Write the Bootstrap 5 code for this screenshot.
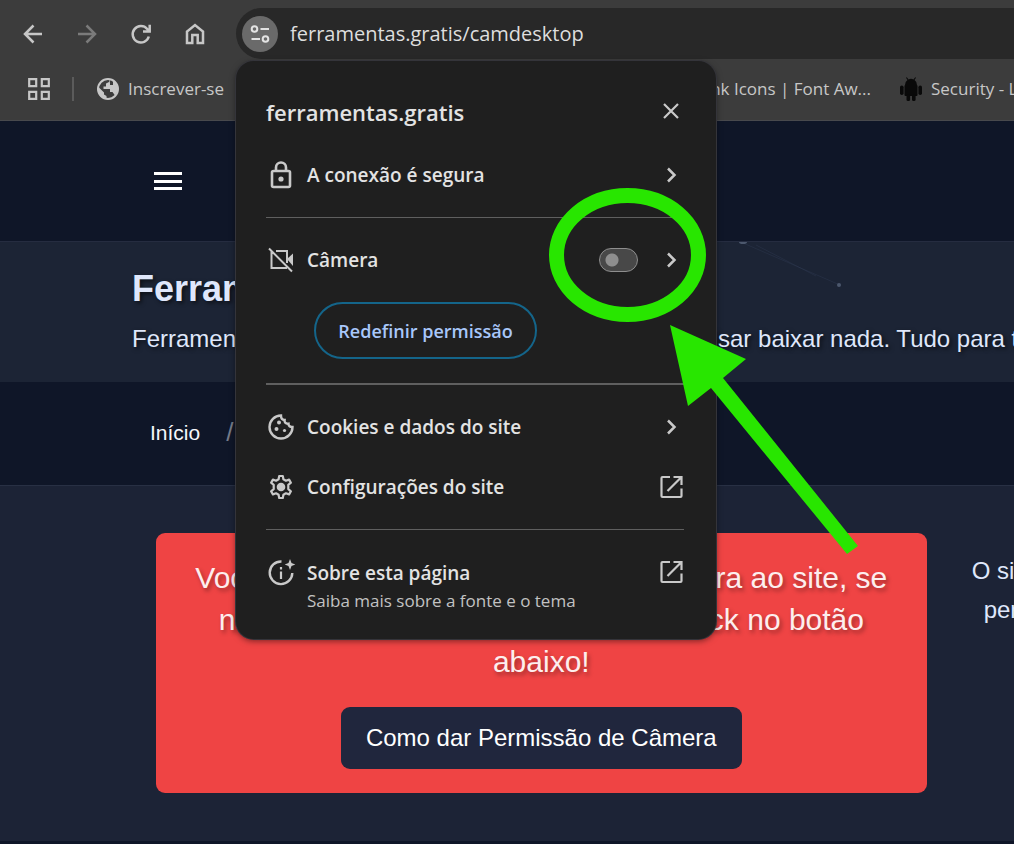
<!DOCTYPE html>
<html lang="pt-BR">
<head>
<meta charset="utf-8">
<meta name="viewport" content="width=device-width, initial-scale=1">
<title>ferramentas.gratis</title>
<link href="https://cdn.jsdelivr.net/npm/bootstrap@5.3.0/dist/css/bootstrap.min.css" rel="stylesheet">
<style>
  body { background: #1c2336; color: #dfe7fb; font-family: "Liberation Sans", Arial, sans-serif; font-size: 24px; overflow-x: hidden; min-height: 100vh; }
  svg { display: block; flex: none; }
  .chrome { background: #3c3c3c; color: #c7c7c7; font-family: "Open Sans", "Noto Sans", sans-serif; z-index: 10; border-bottom: 1px solid #48494d; }
  .tool-row { padding: 8px 0 0 20px; gap: 28px; }
  .tool-btn { flex: none; width: 26px; height: 26px; padding: 0; border: 0; background: none; color: #c7c7c7; }
  .tool-btn:disabled { color: #7b7b7b; opacity: 1; }
  .omnibox { height: 51px; padding-left: 6px; background: #282828; border-radius: 26px 0 0 26px; }
  .tune { flex: none; width: 36px; height: 36px; padding: 0; border: 0; border-radius: 50%; background: #6a6a6a; color: #e3e3e3; }
  .url { min-width: 0; background: none; border: 0; padding: 0; margin-left: 12px; color: #dedede; font-size: 20px; line-height: 28px; outline: 0; }
  .marks { height: 61px; padding: 0 0 2px 28px; font-size: 17px; line-height: 28px; white-space: nowrap; overflow: hidden; }
  .marks a { flex: none; color: #c7c7c7; text-decoration: none; }
  .rule { flex: none; width: 2px; height: 24px; background: #5b5b5b; margin: 0 22px; }
  .mark-gap { margin-left: 473px; }

  .popup { position: absolute; top: 53px; left: 0; width: 480px; padding: 23px 32px 24px 30px; background: #1f1f1f; color: #e3e3e3; border-radius: 18px; box-shadow: 0 0 0 1px #34343a, 0 2px 6px rgba(0,0,0,.5); font-size: 19px; font-weight: 600; line-height: 28px; }
  .popup h1 { font-size: 22px; font-weight: 600; line-height: 56px; margin: 0 0 5px; }
  .popup-row { display: flex; align-items: center; width: 100%; height: 60px; padding: 0 0 0 2px; border: 0; background: none; color: inherit; font-weight: 600; text-align: left; text-decoration: none; }
  .popup-row svg, .close-btn svg { color: #c9c9c9; }
  .popup-row .ico { width: 26px; margin-right: 13px; overflow: visible; }
  .popup hr { margin: 12px 0; border: 0; height: 1px; background: #5f5f5f; opacity: 1; }
  .popup hr.strong { height: 2px; margin-top: 24px; }
  .close-btn { border: 0; background: none; padding: 0 0 8px; }
  .reset-btn { width: 223px; height: 57px; margin: 12px 0 0 48px; padding: 0; border: 2px solid #14658a; border-radius: 29px; background: none; color: #a8c7fa; font-size: 18px; font-weight: 600; }
  .switch { appearance: none; width: 39px; height: 24px; margin: 0 20px 0 0; border: 1px solid #8e8e8e; border-radius: 12px; background: radial-gradient(circle at 12px 11px, #8f8f8f 6px, #484848 7px); }
  .about { height: auto; padding-top: 17px; align-items: flex-start; }
  .about small { display: block; font-size: 17px; font-weight: 400; color: #c2c2c2; }

  .site-nav { height: 120px; padding-left: 154px; background: #0f1628; }
  .menu-btn { border: 0; background: none; padding: 0; }
  .hero { padding: 24px 0 24px 132px; background: #1c2435; border-top: 1px solid #252c40; text-shadow: 2px 2px 4px rgba(0,0,0,.6); white-space: nowrap; overflow: hidden; }
  .hero h2 { font-size: 36px; font-weight: 700; line-height: 46px; margin: 0 0 8px; }
  .hero p { line-height: 38px; margin: 0; }
  .hero span { flex: none; }
  .hero .begin { width: 534px; }
  .dots { position: absolute; left: 736px; top: 0; }
  .crumbs { height: 104px; padding: 0 0 2px 150px; background: #0f1628; border-bottom: 1px solid #283044; font-size: 21px; }
  .crumbs a { color: #f5f7fb; text-decoration: none; }
  .crumbs .sep { color: #757b89; font-size: 26px; margin-left: 26px; }
  .stage { padding: 47px 0 48px 156px; white-space: nowrap; gap: 45px; border-bottom: 3px solid #0f1628; overflow: hidden; }
  .notice { flex: 0 0 76vw; padding: 24px; background: #ef4444; border-radius: 9px; color: #fdeeee; font-size: 30px; line-height: 42px; }
  .notice p { margin: 0 0 24px; text-shadow: 2px 3px 4px rgba(0,0,0,.35); }
  .notice .btn { padding: 12px 25px; border: 0; border-radius: 9px; background: #20263d; color: #fff; font-size: 24px; line-height: 38px; }
  .side { flex: none; margin: 18px 0 0; line-height: 39px; }

  .callout { position: absolute; left: 548px; top: 187px; z-index: 20; pointer-events: none; }
</style>
</head>
<body>
<header class="chrome position-relative">
  <div class="tool-row d-flex align-items-center">
    <button class="tool-btn" aria-label="Voltar"><svg width="26" height="26" viewBox="0 0 26 26" fill="none" stroke="currentColor" stroke-width="2.5"><path d="M22 13H5.500M13.500 4.500 5 13l8.500 8.500"/></svg></button>
    <button class="tool-btn" aria-label="Avançar" disabled><svg width="26" height="26" viewBox="0 0 26 26" fill="none" stroke="currentColor" stroke-width="2.500"><path d="M4 13h16.500M12.500 4.500 21 13l-8.500 8.500"/></svg></button>
    <button class="tool-btn" aria-label="Recarregar"><svg width="26" height="26" viewBox="0 0 26 26" fill="none" stroke="currentColor" stroke-width="2.500"><path d="M20.800 15.500a8.200 8.200 0 1 1-1.600-7.500l2 2.500M21.700 3.800v6.700H15"/></svg></button>
    <button class="tool-btn" aria-label="Início"><svg width="26" height="26" viewBox="0 0 26 26" fill="none" stroke="currentColor" stroke-width="2.500"><path d="M5 22V10.500l8-6.500 8 6.500V22h-5.300v-8h-5.400v8z"/></svg></button>
    <div class="omnibox position-relative d-flex align-items-center flex-grow-1">
      <button class="tune" aria-label="Informações do site"><svg width="36" height="36" viewBox="0 0 36 36" fill="none" stroke="currentColor" stroke-width="2"><circle cx="12.500" cy="13" r="2.800"/><path d="M18.500 13H27M9.500 23H18"/><circle cx="23.500" cy="23" r="2.800"/></svg></button>
      <input class="url flex-grow-1" aria-label="Endereço" value="ferramentas.gratis/camdesktop">
      <section class="popup" aria-label="Informações do site">
        <div class="d-flex justify-content-between">
          <h1>ferramentas.gratis</h1>
          <button class="close-btn" aria-label="Fechar"><svg width="26" height="26" viewBox="0 0 26 26" fill="none" stroke="currentColor" stroke-width="2.200"><path d="m6 6 14 14M20 6 6 20"/></svg></button>
        </div>
        <button class="popup-row"><svg class="ico" width="26" height="30" viewBox="0 0 26 30" fill="none" stroke="currentColor" stroke-width="2.600"><rect x="4" y="11" width="18" height="16" rx="1.500"/><path d="M8 11V7.500a5 5 0 0 1 10 0V11"/><circle cx="13" cy="19" r="2.600" fill="currentColor" stroke="none"/></svg>A conexão é segura<svg class="ms-auto" width="26" height="26" viewBox="0 0 26 26" fill="none" stroke="currentColor" stroke-width="2.500"><path d="m10 6.500 6.500 6.500-6.500 6.500"/></svg></button>
        <hr>
        <div class="popup-row"><svg class="ico" width="26" height="26" viewBox="0 0 26 26"><g fill="none" stroke="currentColor" stroke-width="2"><path d="M1 1.500 24 24.500M8 4h11v12M3.500 4.500V21H19"/></g><path fill="currentColor" d="m19 12 6-5.500v12.500z"/></svg><label for="cam">Câmera</label><input class="switch ms-auto" type="checkbox" role="switch" id="cam"><svg width="26" height="26" viewBox="0 0 26 26" fill="none" stroke="currentColor" stroke-width="2.500"><path d="m10 6.500 6.500 6.500-6.500 6.500"/></svg></div>
        <button class="reset-btn">Redefinir permissão</button>
        <hr class="strong">
        <button class="popup-row"><svg class="ico" width="26" height="26" viewBox="0 0 26 26" fill="none" stroke="currentColor" stroke-width="2.400"><path d="M13 1.500A11.500 11.500 0 1 0 24.500 13c-2.500.3-4-1.200-4-3.300-2.600.5-4.300-1.200-3.900-3.700C14.200 6 13 4 13 1.500z"/><g fill="currentColor" stroke="none"><circle cx="11" cy="8.500" r="2"/><circle cx="8.500" cy="15" r="2"/><circle cx="16.500" cy="16.500" r="1.600"/></g></svg>Cookies e dados do site<svg class="ms-auto" width="26" height="26" viewBox="0 0 26 26" fill="none" stroke="currentColor" stroke-width="2.500"><path d="m10 6.500 6.500 6.500-6.500 6.500"/></svg></button>
        <button class="popup-row"><svg class="ico" width="26" height="26" viewBox="0 0 26 26" fill="none" stroke="currentColor" stroke-width="2.200" stroke-linejoin="round"><path d="M11.200 2h3.600l.6 3.300 2.500 1.400 3.200-1.100 1.800 3.100-2.600 2.200v4.200l2.600 2.200-1.800 3.100-3.200-1.100-2.500 1.400-.6 3.300h-3.600l-.6-3.300-2.500-1.400-3.200 1.100-1.800-3.100 2.600-2.200v-4.200L3.100 8.700l1.800-3.100 3.200 1.100 2.500-1.400z"/><circle cx="13" cy="13" r="4.300" fill="currentColor" stroke="none"/></svg>Configurações do site<svg class="ms-auto" width="26" height="26" viewBox="0 0 26 26" fill="none" stroke="currentColor" stroke-width="2.200"><path d="M12 3H4.500a1 1 0 0 0-1 1v18a1 1 0 0 0 1 1h18a1 1 0 0 0 1-1v-7.500M15.500 3h8v8M23.500 3 9.500 17"/></svg></button>
        <hr>
        <a class="popup-row about" href="#sobre"><svg class="ico" width="28" height="28" viewBox="0 0 26 28" fill="none" stroke="currentColor" stroke-width="2.400"><path d="M13.500 2.500A11.300 11.300 0 1 0 24.300 14"/><path d="M13 12.500v7.500M13 8v2.500" stroke-width="2.200"/><path fill="currentColor" stroke="none" d="M22 0l1.500 4 3.800 1.500-3.800 1.500L22 11l-1.500-4-3.800-1.500 3.800-1.500z"/></svg><span>Sobre esta página<small>Saiba mais sobre a fonte e o tema</small></span><svg class="ms-auto" width="26" height="26" viewBox="0 0 26 26" fill="none" stroke="currentColor" stroke-width="2.200"><path d="M12 3H4.500a1 1 0 0 0-1 1v18a1 1 0 0 0 1 1h18a1 1 0 0 0 1-1v-7.500M15.500 3h8v8M23.500 3 9.500 17"/></svg></a>
      </section>
    </div>
  </div>
  <nav class="marks d-flex align-items-center" aria-label="Favoritos">
    <svg width="22" height="22" viewBox="0 0 22 22" fill="none" stroke="#c7c7c7" stroke-width="2.200"><path d="M1.200 1.200h7v7h-7zM13.800 1.200h7v7h-7zM1.200 13.800h7v7h-7zM13.800 13.800h7v7h-7z"/></svg>
    <span class="rule"></span>
    <a class="d-flex align-items-center" href="#inscrever"><svg class="me-2" width="24" height="24" viewBox="0 0 24 24"><circle cx="12" cy="12" r="10" fill="none" stroke="#c7c7c7" stroke-width="2"/><path fill="#c7c7c7" d="M13 1.500v3.500l-3 1.500v3H7.500v2.500H14v3h2.500l2.500 3.500A10.500 10.500 0 0 0 18 3.500L17 4v4h-3V6zM2 9.500 8 15.500v2l2.500 1.500v3A10 10 0 0 1 2 9.500z"/></svg>Inscrever-se</a>
    <a class="mark-gap" href="#icons">Link Icons | Font Aw...</a>
    <a class="d-flex align-items-center ms-4 ps-1" href="#security"><svg class="me-2" width="24" height="24" viewBox="-1 0 24 24" fill="#090909"><path d="M5 8a6 6 0 0 1 2.500-5L6 .8 6.800.2 8.500 2.400a6 6 0 0 1 5 0L15.200.2l.8.6L14.500 3A6 6 0 0 1 17 8z"/><rect x="4.500" y="8" width="13" height="11" rx="1"/><rect x="0" y="8.500" width="3.600" height="9.500" rx="1.800"/><rect x="18.400" y="8.500" width="3.600" height="9.500" rx="1.800"/><rect x="6.500" y="17" width="3.600" height="7" rx="1.500"/><rect x="12" y="17" width="3.600" height="7" rx="1.500"/></svg>Security - L</a>
  </nav>
</header>

<nav class="site-nav d-flex align-items-center" aria-label="Principal">
  <button class="menu-btn" aria-label="Menu"><svg width="28" height="20" viewBox="0 0 28 20" fill="#fff"><path d="M0 1h28v3H0zM0 9h28v3H0zM0 16h28v3H0z"/></svg></button>
</nav>
<section class="hero position-relative">
  <svg class="dots" width="110" height="50" viewBox="0 0 110 50"><path d="M7 1 104 43M20 3l60 31" fill="none" stroke="#33405a" stroke-width="1" opacity=".35"/><ellipse cx="7" cy="0" rx="4" ry="2" fill="#4c586d"/><circle cx="103" cy="43" r="2" fill="#4c586d"/></svg>
  <h2>Ferramentas</h2>
  <p class="d-flex"><span class="begin">Ferramentas</span><span>precisar baixar nada. Tudo para t</span></p>
</section>
<nav class="crumbs d-flex align-items-center" aria-label="Trilha"><a href="#inicio">Início</a><span class="sep">/</span></nav>
<main class="stage d-flex align-items-start">
  <section class="notice text-center">
    <p>Você precisa dar permissão para câmera ao site, se<br>não souber como fazer isto dê um click no botão<br>abaixo!</p>
    <button class="btn">Como dar Permissão de Câmera</button>
  </section>
  <p class="side text-center">O site pede sua<br>permissão da</p>
</main>

<svg class="callout" width="312" height="370" viewBox="548 187 312 370" fill="#28e600"><ellipse cx="627.500" cy="255" rx="71" ry="59.500" fill="none" stroke="#28e600" stroke-width="15"/><path d="M670 325l76 34-23 19 135 168-11 8-136-166-23 18z"/></svg>
<script src="https://cdn.jsdelivr.net/npm/bootstrap@5.3.0/dist/js/bootstrap.bundle.min.js"></script>
</body>
</html>
